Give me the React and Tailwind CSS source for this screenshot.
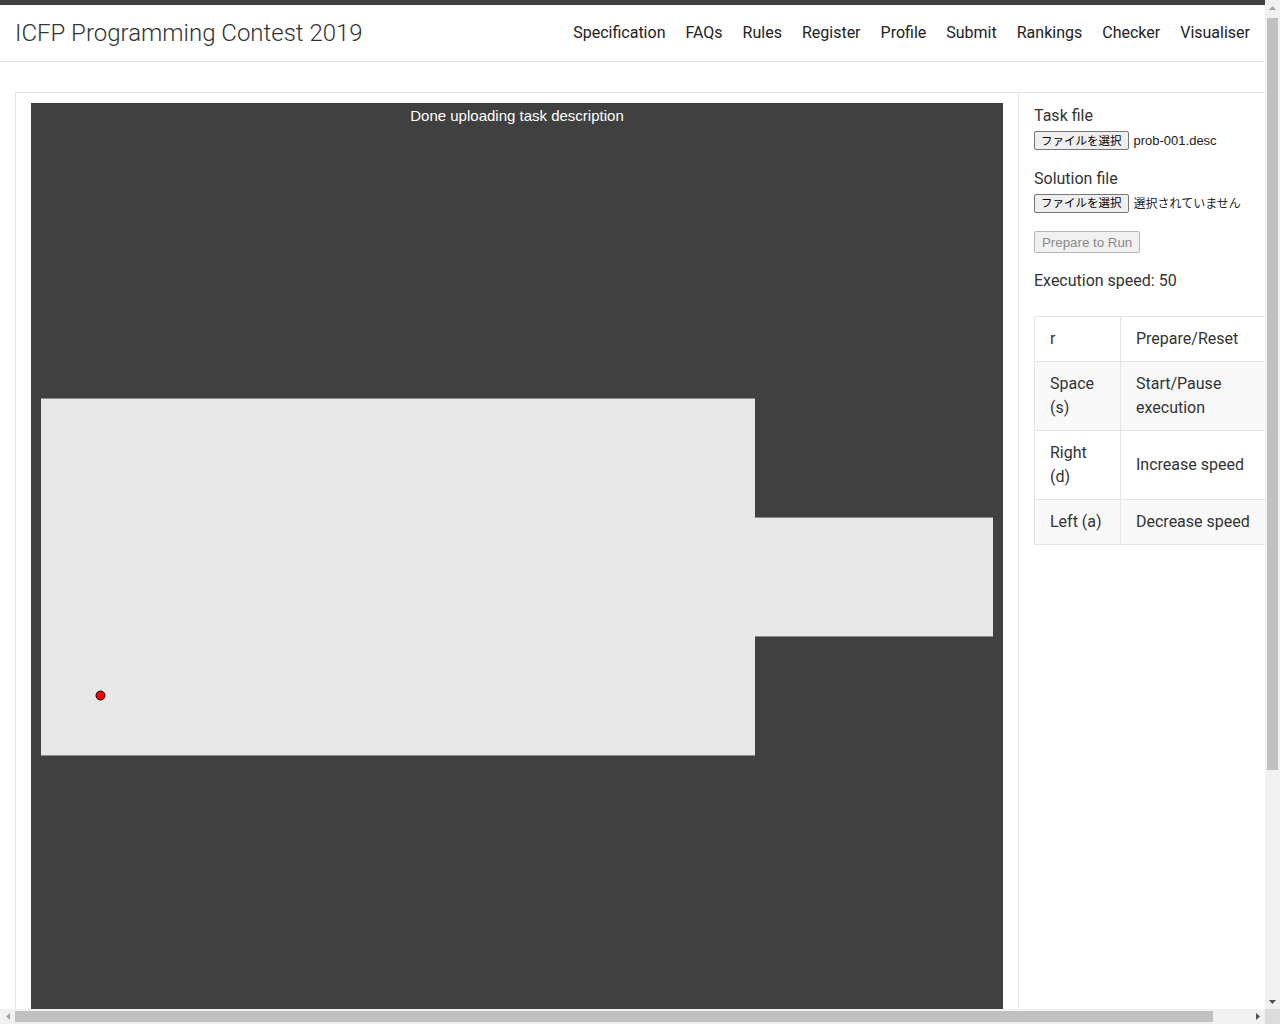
import React from "react";

const navItems = ["Specification", "FAQs", "Rules", "Register", "Profile", "Submit", "Rankings", "Checker", "Visualiser"];

const keys = [
  ["r", "Prepare/Reset"],
  ["Space (s)", "Start/Pause execution"],
  ["Right (d)", "Increase speed"],
  ["Left (a)", "Decrease speed"],
];

function FileButton() {
  return (
    <span className="inline-flex h-[19px] items-center rounded-[2px] border border-[#767676] bg-[#efefef] px-[6px] text-[11.5px] leading-none text-black [font-family:'Noto_Sans_CJK_JP',sans-serif]">
      ファイルを選択
    </span>
  );
}

function MapDrawing() {
  return (
    <svg width="972" height="972" className="block">
      <rect x="10" y="295" width="714" height="357" fill="#e8e8e8" />
      <rect x="724" y="414" width="238" height="119" fill="#e8e8e8" />
      <line x1="10" y1="295.5" x2="724" y2="295.5" stroke="#8a8a8a" strokeWidth="1" />
      <line x1="10" y1="652.5" x2="724" y2="652.5" stroke="#8a8a8a" strokeWidth="1" />
      <line x1="724" y1="414.5" x2="962" y2="414.5" stroke="#8a8a8a" strokeWidth="1" />
      <line x1="724" y1="533.5" x2="962" y2="533.5" stroke="#8a8a8a" strokeWidth="1" />
      <circle cx="69.5" cy="592.5" r="4.5" fill="#ff0000" stroke="#000" strokeWidth="1" />
    </svg>
  );
}

function Page() {
  return (
    <div className="min-h-[1314px] bg-white text-[#333] [font-family:Roboto,'Noto_Sans',sans-serif]">
      <div className="h-[5px] bg-[#404040]" />
      <header className="flex h-[57px] items-center justify-between border-b border-[#e5e5e5] pl-[15px] pr-[15px]">
        <div className="text-[24px] font-light text-[#333] [font-family:'Roboto_Light',Roboto,sans-serif]">
          ICFP Programming Contest 2019
        </div>
        <nav className="flex gap-[20px] text-[16px] text-[#222]">
          {navItems.map((n) => (
            <span key={n}>{n}</span>
          ))}
        </nav>
      </header>

      <div className="mt-[30px] ml-[15px] flex w-max border border-[#e5e5e5]">
        <div className="px-[15px] pb-[15px] pt-[10px]">
          <div className="relative h-[972px] w-[972px] bg-[#404040]">
            <div className="absolute left-0 right-0 top-[2px] text-center text-[15px] text-white [font-family:'Liberation_Sans',Arial,sans-serif]">
              Done uploading task description
            </div>
            <MapDrawing />
          </div>
        </div>
        <div className="w-[281px] border-l border-[#e5e5e5] pl-[15px] pt-[12px]">
          <div className="text-[16px] leading-[22px]">Task file</div>
          <div className="mt-[4px] flex items-center gap-[5px]">
            <FileButton />
            <span className="text-[13px] text-[#222] [font-family:'Liberation_Sans',Arial,sans-serif]">prob-001.desc</span>
          </div>
          <div className="mt-[17px] text-[16px] leading-[22px]">Solution file</div>
          <div className="mt-[4px] flex items-center gap-[5px]">
            <FileButton />
            <span className="text-[12px] text-[#222] [font-family:'Noto_Sans_CJK_JP',sans-serif]">選択されていません</span>
          </div>
          <div className="mt-[17px]">
            <span className="inline-flex h-[22px] items-center rounded-[2px] border border-[#b5b5b5] bg-[#f1f1f1] px-[7px] text-[13.3px] text-[#8a8a8a] [font-family:'Liberation_Sans',Arial,sans-serif]">
              Prepare to Run
            </span>
          </div>
          <div className="mt-[15px] text-[16px] leading-[24px]">Execution speed: 50</div>
          <table className="mt-[23px] w-[251px] border-collapse text-[16px] leading-[24px] text-[#333]">
            <tbody>
              {keys.map(([k, v], i) => (
                <tr key={k} className={i % 2 === 1 ? "bg-[#f9f9f9]" : "bg-white"}>
                  <td className="w-[86px] border border-[#e5e5e5] px-[15px] py-[10px] align-middle">{k}</td>
                  <td className="border border-[#e5e5e5] px-[15px] py-[10px] align-middle">{v}</td>
                </tr>
              ))}
            </tbody>
          </table>
        </div>
      </div>
    </div>
  );
}

export default function App() {
  return (
    <div className="flex h-[1024px] w-[1280px] flex-col overflow-hidden bg-white">
      <div className="flex h-[1009px]">
        <div className="h-[1009px] w-[1265px] overflow-hidden">
          <Page />
        </div>
        <div className="flex h-[1009px] w-[15px] flex-col bg-[#f1f1f1]">
          <div className="flex h-[15px] items-center justify-center">
            <svg width="7" height="4" viewBox="0 0 7 4"><path d="M0 4 L3.5 0 L7 4 Z" fill="#a3a3a3" /></svg>
          </div>
          <div className="mt-[3px] ml-[2px] h-[752px] w-[11px] bg-[#c1c1c1]" />
          <div className="flex-1" />
          <div className="flex h-[15px] items-center justify-center">
            <svg width="7" height="4" viewBox="0 0 7 4"><path d="M0 0 L3.5 4 L7 0 Z" fill="#505050" /></svg>
          </div>
        </div>
      </div>
      <div className="flex h-[15px]">
        <div className="flex h-[15px] w-[1265px] items-center bg-[#f1f1f1]">
          <div className="flex h-[15px] w-[15px] items-center justify-center">
            <svg width="4" height="7" viewBox="0 0 4 7"><path d="M4 0 L0 3.5 L4 7 Z" fill="#a3a3a3" /></svg>
          </div>
          <div className="h-[11px] w-[1198px] bg-[#c1c1c1]" />
          <div className="flex-1" />
          <div className="flex h-[15px] w-[15px] items-center justify-center">
            <svg width="4" height="7" viewBox="0 0 4 7"><path d="M0 0 L4 3.5 L0 7 Z" fill="#505050" /></svg>
          </div>
        </div>
        <div className="h-[15px] w-[15px] bg-[#dcdcdc]" />
      </div>
    </div>
  );
}
